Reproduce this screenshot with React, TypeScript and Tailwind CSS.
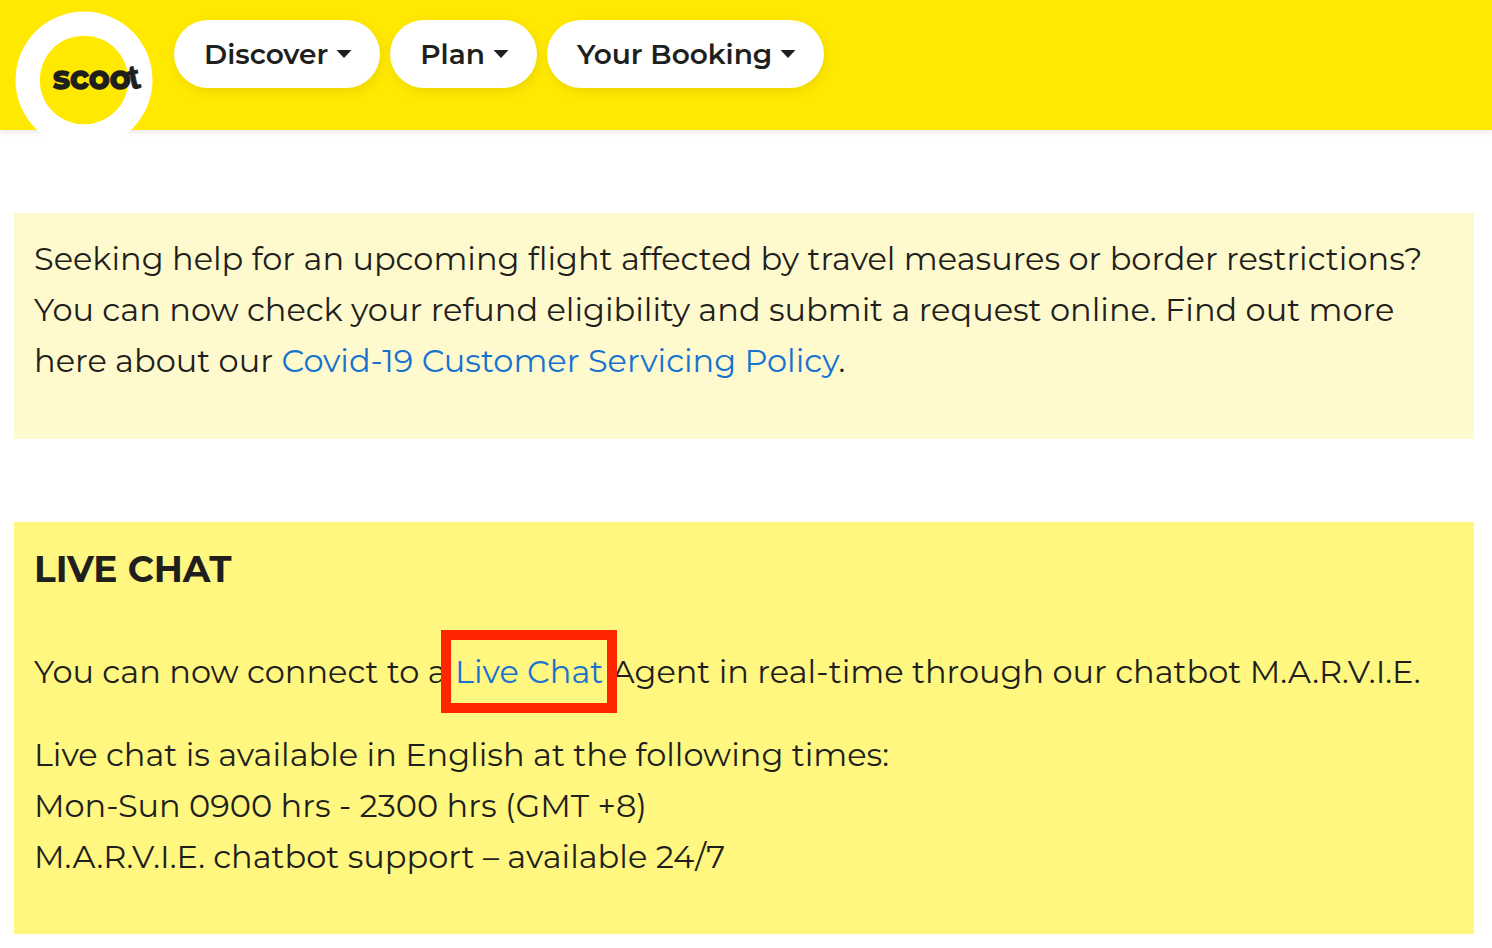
import React from "react";

const navItems = ["Discover", "Plan", "Your Booking"];

function Logo() {
  return (
    <svg width="138" height="138" viewBox="0 0 138 138" role="img" aria-label="Scoot">
      <circle cx="69" cy="69" r="68.5" fill="#ffffff" />
      <circle cx="69" cy="69" r="44.3" fill="#ffe900" />
      <g fill="#1f1f1d" stroke="#1f1f1d" fontWeight="700">
        <text x="38" y="78" fontSize="32" strokeWidth="1.4" fontFamily="Montserrat, Inter, sans-serif">
          scoo
        </text>
        <text
          x="113"
          y="78"
          fontSize="34"
          strokeWidth="0.8"
          fontFamily="'Liberation Sans', sans-serif"
          transform="rotate(-12 118 67)"
        >
          t
        </text>
      </g>
    </svg>
  );
}

function NavButton({ label }: { label: string }) {
  return (
    <button
      type="button"
      aria-haspopup="menu"
      className="flex h-[68px] items-center gap-2 rounded-full bg-white pr-7 pl-[30px] text-[28px] leading-9 font-semibold shadow-[2px_4px_12px_rgba(0,0,0,0.08)]"
    >
      {label}
      <svg width="16" height="8" viewBox="0 0 16 8" aria-hidden="true">
        <path d="M0.5 0H15.5L8 8Z" fill="#1f1f1d" />
      </svg>
    </button>
  );
}

export default function App() {
  return (
    <div className="font-['Montserrat','Inter',sans-serif] text-[#1f1f1d]">
      <header className="flex h-[130px] items-start bg-[#ffe900] pl-[15px] shadow-[0_3px_5px_rgba(0,0,0,0.08)]">
        <a href="#home" className="mt-[11px] shrink-0">
          <Logo />
        </a>
        <nav className="ml-[21px] flex gap-[10px] pt-5">
          {navItems.map((item) => (
            <NavButton key={item} label={item} />
          ))}
        </nav>
      </header>

      <main className="mt-[83px] mr-[18px] mb-[14px] ml-[14px] flex flex-col gap-[83px] text-[32px] leading-[51px]">
        <section className="bg-[#fffacd] px-5 pt-5 pb-[53px]">
          <p>
            Seeking help for an upcoming flight affected by travel measures or border restrictions?
            <br />
            You can now check your refund eligibility and submit a request online. Find out more
            <br />
            here about our{" "}
            <a href="#policy" className="text-[#1772d0]">
              Covid-19 Customer Servicing Policy
            </a>
            .
          </p>
        </section>

        <section className="bg-[#fff780] px-5 pt-5 pb-[52px]">
          <h2 className="mb-[49px] text-[36px] leading-[55px] font-bold">LIVE CHAT</h2>
          <p className="mb-8">
            You can now connect to a{" "}
            <a href="#chat" className="relative inline-block text-[#1772d0]">
              Live Chat
              <span className="absolute -inset-x-[14px] -inset-y-4 border-[10px] border-[#ff2600]" />
            </a>{" "}
            Agent in real-time through our chatbot M.A.R.V.I.E.
          </p>
          <p>
            Live chat is available in English at the following times:
            <br />
            Mon-Sun 0900 hrs - 2300 hrs (GMT +8)
            <br />
            M.A.R.V.I.E. chatbot support – available 24/7
          </p>
        </section>
      </main>
    </div>
  );
}
